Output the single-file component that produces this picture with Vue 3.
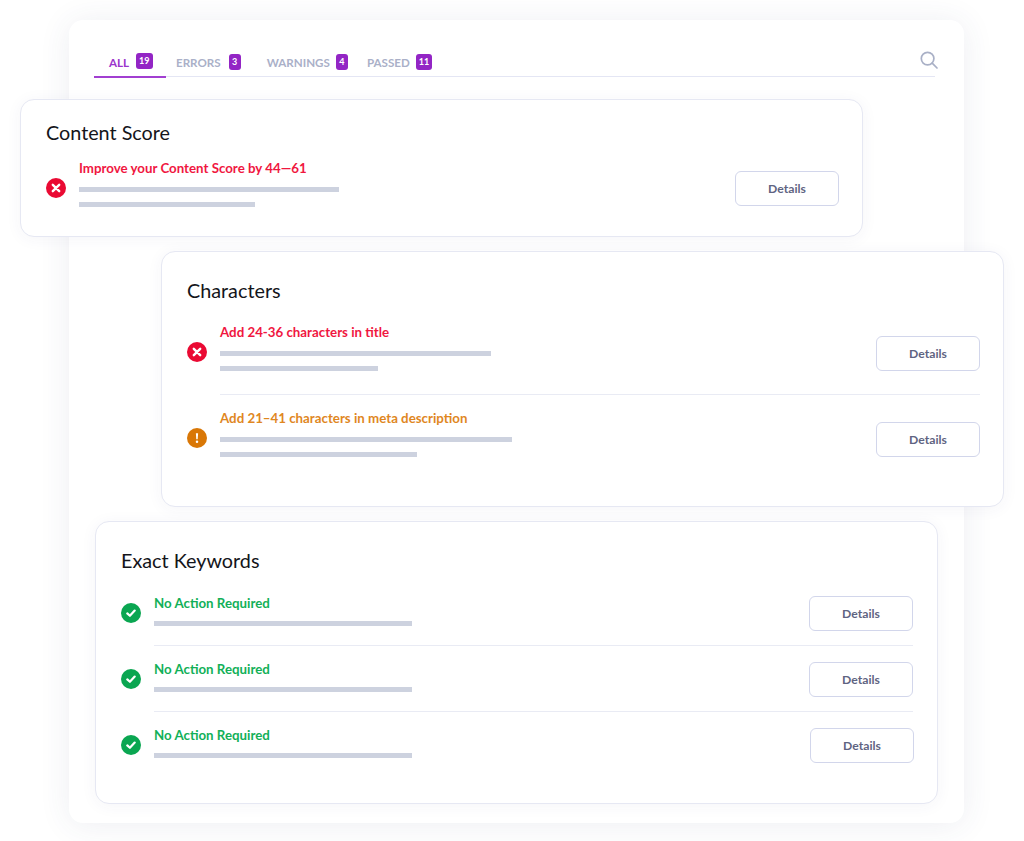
<template>
    <div class="page">
        <section class="panel">
            <div class="tabs-bar">
                <div class="tabs">
                    <div v-for="tab in tabs" :key="tab.name" class="tab" :class="{ active: tab.active }">
                        <span class="tab-name">{{ tab.name }}</span>
                        <span class="tab-count">{{ tab.count }}</span>
                    </div>
                </div>
                <svg class="search-icon" width="18" height="18" viewBox="0 0 18 18" fill="none" stroke="#a9b0c6" stroke-width="1.7">
                    <circle cx="7.6" cy="7.6" r="6.3" />
                    <path d="M12.2 12.2 L17 17" stroke-linecap="round" />
                </svg>
            </div>

            <div v-for="card in cards" :key="card.title" class="card" :class="card.cls">
                <h2 class="card-title">{{ card.title }}</h2>
                <template v-for="(row, index) in card.rows" :key="index">
                    <div v-if="index > 0" class="divider"></div>
                    <div class="row" :class="{ single: row.bars.length === 1 }">
                        <span class="status" :class="row.status">
                            <svg v-if="row.status === 'error'" width="10" height="10" viewBox="0 0 10 10" fill="none" stroke="#fff" stroke-width="2.4" stroke-linecap="round">
                                <path d="M1.8 1.8 L8.2 8.2 M8.2 1.8 L1.8 8.2" />
                            </svg>
                            <svg v-else-if="row.status === 'warning'" width="10" height="12" viewBox="0 0 10 12" fill="#fff">
                                <path d="M3.9 1.2 H6.1 L5.7 7.2 H4.3 Z" />
                                <circle cx="5" cy="9.7" r="1.25" />
                            </svg>
                            <svg v-else width="10" height="10" viewBox="0 0 10 10" fill="none" stroke="#fff" stroke-width="2.2" stroke-linecap="round" stroke-linejoin="round">
                                <path d="M1.3 5.4 L3.9 7.8 L8.7 2.6" />
                            </svg>
                        </span>
                        <div class="row-body">
                            <p class="row-text" :class="row.status">{{ row.text }}</p>
                            <div v-for="bar in row.bars" :key="bar" class="bar" :style="{ width: bar + 'px' }"></div>
                        </div>
                        <button class="details" :class="{ nudge: row.nudge }">Details</button>
                    </div>
                </template>
            </div>
        </section>
    </div>
</template>

<script setup>
const tabs = [
    { name: 'ALL', count: 19, active: true },
    { name: 'ERRORS', count: 3 },
    { name: 'WARNINGS', count: 4 },
    { name: 'PASSED', count: 11 }
];

const cards = [
    {
        title: 'Content Score',
        cls: 'card-score',
        rows: [
            { status: 'error', text: 'Improve your Content Score by 44—61', bars: [260, 176] }
        ]
    },
    {
        title: 'Characters',
        cls: 'card-chars',
        rows: [
            { status: 'error', text: 'Add 24-36 characters in title', bars: [271, 158] },
            { status: 'warning', text: 'Add 21–41 characters in meta description', bars: [292, 197] }
        ]
    },
    {
        title: 'Exact Keywords',
        cls: 'card-keywords',
        rows: [
            { status: 'ok', text: 'No Action Required', bars: [258] },
            { status: 'ok', text: 'No Action Required', bars: [258] },
            { status: 'ok', text: 'No Action Required', bars: [258], nudge: true }
        ]
    }
];
</script>

<style scoped>
.page {
    width: 1024px;
    height: 841px;
    padding-top: 20px;
    box-sizing: border-box;
    overflow: hidden;
    background: #fff;
    font-family: Lato, "Liberation Sans", sans-serif;
}

.panel {
    width: 895px;
    height: 803px;
    margin-left: 69px;
    box-sizing: border-box;
    padding-top: 28px;
    background: #fff;
    border-radius: 14px;
    box-shadow: 0 2px 32px rgba(60, 64, 110, 0.09);
}

.tabs-bar {
    display: flex;
    justify-content: space-between;
    align-items: flex-start;
    height: 28px;
    margin: 0 29px 0 25px;
    border-bottom: 1.5px solid #e4e6f4;
}

.tabs {
    display: flex;
    height: 28px;
}

.tab {
    display: flex;
    align-items: center;
    gap: 7px;
    height: 28px;
    padding-top: 1px;
    box-sizing: border-box;
    font-size: 11.6px;
    font-weight: 700;
    color: #aab0c8;
}

.tab:nth-child(1) {
    width: 72px;
    padding-left: 15px;
}

.tab:nth-child(2) {
    gap: 8px;
    margin-left: 10px;
}

.tab:nth-child(3) {
    gap: 6px;
    margin-left: 26px;
}

.tab:nth-child(4) {
    gap: 6px;
    margin-left: 19px;
}

.tab.active {
    color: #9b35cb;
    border-bottom: 2px solid #a23fd1;
    height: 29.5px;
    padding-bottom: 0;
}

.tab-count {
    min-width: 12px;
    height: 16px;
    padding: 0 3px;
    box-sizing: border-box;
    border-radius: 3px;
    background: #9325c5;
    color: #fff;
    font-size: 9px;
    line-height: 16px;
    text-align: center;
    margin-top: -2px;
}

.search-icon {
    margin: 3px -3px 0 0;
}

.card {
    position: relative;
    width: 843px;
    box-sizing: border-box;
    background: #fff;
    border: 1px solid #e6e8f3;
    border-radius: 14px;
    padding: 26px 23px 39px 25px;
    box-shadow: 0 2px 16px rgba(60, 64, 110, 0.05);
}

.card-score {
    margin: 22px 0 0 -49px;
    padding-top: 20px;
    padding-bottom: 19px;
}

.card-chars {
    margin: 14px 0 0 92px;
}

.card-keywords {
    margin: 14px 0 0 26px;
    padding-right: 24px;
}

.card-title {
    margin: 0 0 21px;
    font-size: 19.8px;
    line-height: 24px;
    font-weight: 400;
    color: #14151a;
}

.card-score .card-title {
    margin-bottom: 15px;
}

.card-keywords .card-title {
    margin-bottom: 22px;
}

.divider {
    height: 1px;
    margin: 13px 0 14px 33px;
    background: #e9ebf4;
}

.row {
    display: flex;
    align-items: center;
    height: 58px;
}

.row.single {
    height: 38px;
}

.status {
    display: flex;
    align-items: center;
    justify-content: center;
    flex: none;
    width: 20px;
    height: 20px;
    margin-right: 13px;
    border-radius: 50%;
}

.status.error {
    background: #ea0a33;
}

.status.warning {
    background: #d97706;
}

.status.ok {
    background: #0aa651;
}

.row-body {
    align-self: flex-start;
    flex: 1;
}

.row-text {
    margin: 0 0 10px;
    font-size: 13.3px;
    line-height: 18px;
    font-weight: 700;
}

.row.single .row-text {
    margin-bottom: 9px;
}

.row-text.error {
    color: #f0173f;
}

.row-text.warning {
    color: #e0871f;
}

.row-text.ok {
    color: #12b058;
}

.bar {
    height: 5px;
    margin-bottom: 10px;
    background: #cdd2df;
}

.details {
    flex: none;
    width: 104px;
    height: 35px;
    margin-top: 1px;
    padding: 0;
    background: #fff;
    border: 1.5px solid #d2d6eb;
    border-radius: 6px;
    font-family: inherit;
    font-size: 12.2px;
    font-weight: 700;
    color: #5f6482;
}

.details.nudge {
    margin-right: -1px;
}

.card-chars .details {
    margin-top: 3px;
}
</style>
